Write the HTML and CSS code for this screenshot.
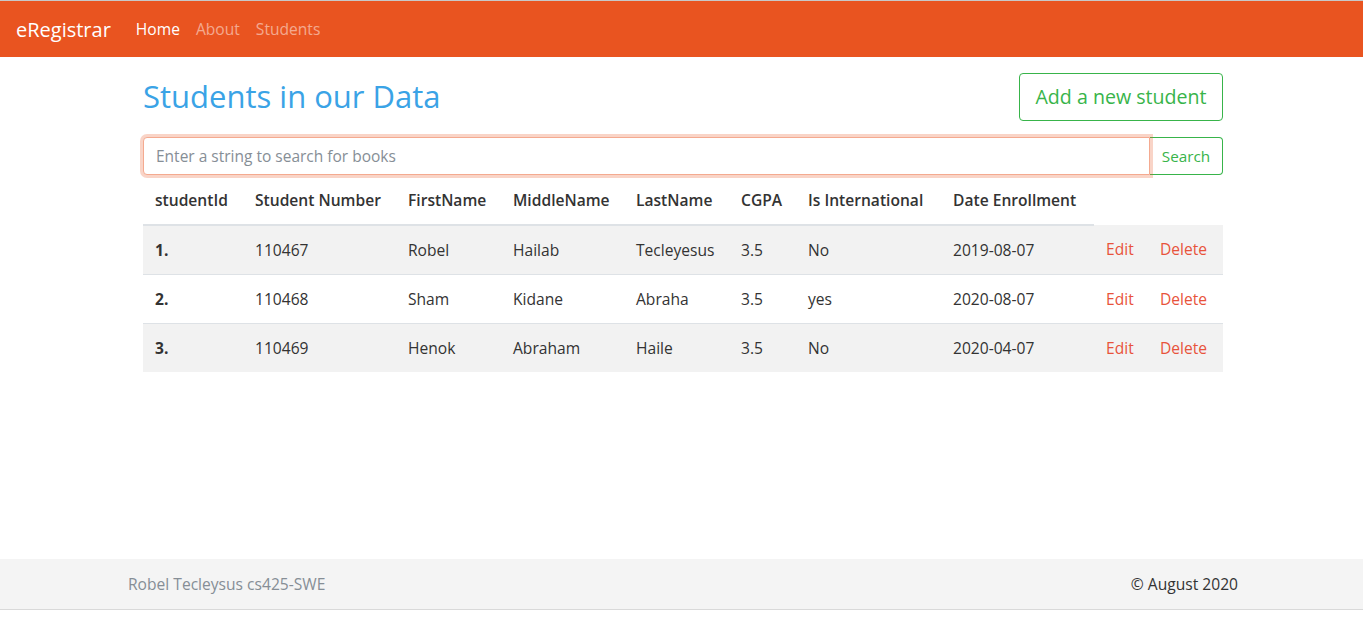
FILE: index.html
```html
<!DOCTYPE html>
<html lang="en">
<head>
<meta charset="utf-8">
<title>eRegistrar</title>
<link rel="stylesheet" href="styles.css">
</head>
<body>
<div class="page">
  <nav class="navbar">
    <a class="brand" href="#">eRegistrar</a>
    <ul class="nav">
      <li><a class="nav-link active" href="#">Home</a></li>
      <li><a class="nav-link" href="#">About</a></li>
      <li><a class="nav-link" href="#">Students</a></li>
    </ul>
  </nav>

  <main class="main">
    <div class="content">
      <div class="title-row">
        <h1 class="title">Students in our Data</h1>
        <a class="btn btn-lg" href="#">Add a new student</a>
      </div>
      <form class="search">
        <input class="search-input" type="text" placeholder="Enter a string to search for books">
        <button class="btn btn-search" type="button">Search</button>
      </form>
      <table class="table">
        <colgroup>
          <col class="c1"><col class="c2"><col class="c3"><col class="c4"><col class="c5">
          <col class="c6"><col class="c7"><col class="c8"><col class="c9"><col class="c10">
        </colgroup>
        <thead>
          <tr>
            <th>studentId</th><th>Student Number</th><th>FirstName</th><th>MiddleName</th>
            <th>LastName</th><th>CGPA</th><th>Is International</th><th>Date Enrollment</th>
          </tr>
        </thead>
        <tbody>
          <tr class="odd">
            <th>1.</th><td>110467</td><td>Robel</td><td>Hailab</td><td>Tecleyesus</td>
            <td>3.5</td><td>No</td><td>2019-08-07</td><td><a class="act" href="#">Edit</a></td><td><a class="act" href="#">Delete</a></td>
          </tr>
          <tr>
            <th>2.</th><td>110468</td><td>Sham</td><td>Kidane</td><td>Abraha</td>
            <td>3.5</td><td>yes</td><td>2020-08-07</td><td><a class="act" href="#">Edit</a></td><td><a class="act" href="#">Delete</a></td>
          </tr>
          <tr class="odd">
            <th>3.</th><td>110469</td><td>Henok</td><td>Abraham</td><td>Haile</td>
            <td>3.5</td><td>No</td><td>2020-04-07</td><td><a class="act" href="#">Edit</a></td><td><a class="act" href="#">Delete</a></td>
          </tr>
        </tbody>
      </table>
    </div>
  </main>

  <footer class="footer">
    <div class="footer-inner">
      <span class="muted">Robel Tecleysus cs425-SWE</span>
      <span class="copy">© August 2020</span>
    </div>
  </footer>
</div>
</body>
</html>
```

FILE: styles.css
```css
* { box-sizing: border-box; }
html, body { margin: 0; padding: 0; }
body {
  font-family: "Open Sans", "Liberation Sans", sans-serif;
  font-size: 15.5px;
  color: #333;
  background: #fff;
  border-top: 1px solid #c8c8c8;
}
.page { display: flex; flex-direction: column; min-height: 616px; }

.navbar {
  background: #e95420;
  height: 56px;
  display: flex;
  align-items: center;
  padding: 0 16px;
}
.brand {
  color: #fff;
  text-decoration: none;
  font-size: 20px;
  margin-right: 17px;
}
.nav { list-style: none; display: flex; margin: 0; padding: 0; }
.nav-link {
  display: block;
  color: rgba(255,255,255,0.5);
  text-decoration: none;
  font-size: 15.6px;
  padding: 8px 8px;
}
.nav-link.active { color: #fff; }

.main { flex: 1; }
.content { width: 1080px; margin: 0 0 0 143px; padding-top: 16px; }

.title-row { display: flex; justify-content: space-between; align-items: center; }
.title {
  margin: 0;
  font-weight: 400;
  font-size: 31px;
  color: #3aa3e6;
  line-height: 1.2;
}
.btn {
  display: inline-block;
  border: 1px solid #38b44a;
  color: #38b44a;
  background: transparent;
  text-decoration: none;
  font-family: inherit;
  border-radius: 4px;
}
.btn-lg {
  font-size: 19.6px;
  height: 48px;
  line-height: 46px;
  padding: 0;
  width: 204px;
  text-align: center;
}

.search { display: flex; margin-top: 16px; height: 38px; }
.search-input {
  flex: 1;
  height: 38px;
  border: 1px solid #f4aa90;
  border-radius: 4px 0 0 4px;
  box-shadow: 0 0 0 3px rgba(233,84,32,0.25);
  padding: 6px 12px;
  font-family: inherit;
  font-size: 15.5px;
  color: #495057;
  outline: none;
  position: relative;
  z-index: 1;
}
.search-input::placeholder { color: #868e96; }
.btn-search {
  width: 73px;
  height: 38px;
  border-radius: 0 4px 4px 0;
  border-left: none;
  font-size: 15.3px;
  padding: 0;
  cursor: pointer;
}

.table { width: 1080px; border-collapse: collapse; table-layout: fixed; margin-top: 1px; }
.c1 { width: 100px; } .c2 { width: 153px; } .c3 { width: 105px; } .c4 { width: 123px; }
.c5 { width: 105px; } .c6 { width: 67px; } .c7 { width: 145px; } .c8 { width: 153px; }
.c9 { width: 54px; } .c10 { width: 75px; }
.table th, .table td {
  text-align: left;
  padding: 12px 12px;
  line-height: 24px;
  vertical-align: top;
  white-space: nowrap;
  font-size: 15.6px;
}
.table thead th { border-bottom: 2px solid #dee2e6; font-weight: 600; }
.table tbody th { font-weight: 700; }
.table tbody tr { border-top: 1px solid #dee2e6; }
.table thead + tbody tr:first-child { border-top: none; }
.table tbody tr.odd { background: #f2f2f2; }
.act { color: #e8533b; text-decoration: none; }

.footer {
  background: #f4f4f4;
  height: 51px;
  border-bottom: 1px solid #d9d9d9;
  margin-bottom: 7px;
}
.footer-inner {
  width: 1110px;
  margin-left: 128px;
  height: 50px;
  display: flex;
  justify-content: space-between;
  align-items: center;
}
.muted { color: #868e96; font-size: 15.6px; }
.copy { color: #333; font-size: 15.6px; }
```
